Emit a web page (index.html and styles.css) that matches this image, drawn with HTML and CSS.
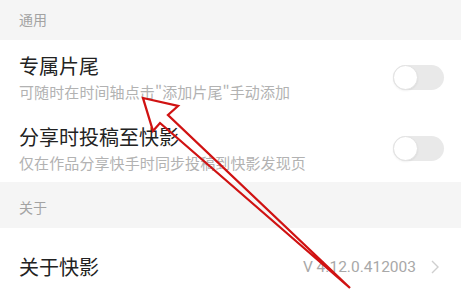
FILE: index.html
```html
<!DOCTYPE html>
<html lang="zh-CN">
<head>
    <meta charset="UTF-8">
    <title>设置</title>
    <link rel="stylesheet" href="styles.css">
</head>
<body>
    <div class="section-title first">通用</div>
    <div class="row">
        <div class="row-text">
            <div class="row-title">专属片尾</div>
            <div class="row-desc">可随时在时间轴点击"添加片尾"手动添加</div>
        </div>
        <div class="switch"><span class="knob"></span></div>
    </div>
    <div class="row">
        <div class="row-text">
            <div class="row-title">分享时投稿至快影</div>
            <div class="row-desc">仅在作品分享快手时同步投稿到快影发现页</div>
        </div>
        <div class="switch"><span class="knob"></span></div>
    </div>

    <div class="section-title">关于</div>
    <div class="row about">
        <div class="row-title">关于快影</div>
        <div class="row-extra">
            <span class="version">V 4.12.0.412003</span>
            <svg class="chevron" width="8" height="14" viewBox="0 0 8 14">
                <path d="M1 1 L7 7 L1 13" fill="none" stroke="#cfcfcf" stroke-width="1.4"/>
            </svg>
        </div>
    </div>

    <!-- annotation arrow -->
    <svg class="arrow" width="461" height="305" viewBox="0 0 461 305">
        <polygon points="143,98 178,106 168,115 350,288 160,123 153,131"
                 fill="none" stroke="#d01212" stroke-width="2.3" stroke-linejoin="miter"/>
    </svg>
</body>
</html>
```

FILE: styles.css
```css
* {
    margin: 0;
    padding: 0;
    box-sizing: border-box;
}

body {
    font-family: "Noto Sans CJK SC", "Noto Sans", sans-serif;
    background: #fff;
    width: 461px;
    height: 305px;
    overflow: hidden;
    position: relative;
}

.section-title {
    background: #f5f5f5;
    color: #a3a3a3;
    font-size: 14px;
    line-height: 18px;
    height: 46px;
    padding: 16px 19px 0;
}

.section-title.first {
    height: 40px;
    padding-top: 10px;
}

.row {
    display: flex;
    align-items: center;
    justify-content: space-between;
    padding: 14px 17px 10px 19px;
}

.row-title {
    color: #222;
    font-size: 20px;
    line-height: 24px;
}

.row-desc {
    color: #b2b2b2;
    font-size: 15px;
    line-height: 19px;
    margin-top: 4px;
    letter-spacing: 0.1px;
}

.switch {
    width: 51px;
    height: 25px;
    border-radius: 13px;
    background: #e9e9e9;
    position: relative;
    margin-top: -1px;
}

.knob {
    position: absolute;
    left: 0;
    top: 0;
    width: 25px;
    height: 25px;
    border-radius: 50%;
    background: #fff;
    border: 1px solid #e2e2e2;
    box-shadow: 0 1px 2px rgba(0,0,0,0.06);
}

.row.about {
    height: 77px;
    padding: 0 22px 0 19px;
}

.row-extra {
    display: flex;
    align-items: center;
    gap: 15px;
}

.version {
    font-family: Roboto, "Noto Sans", sans-serif;
    color: #a8a8a8;
    font-size: 15.5px;
}

.arrow {
    position: absolute;
    left: 0;
    top: 0;
    pointer-events: none;
}
```
